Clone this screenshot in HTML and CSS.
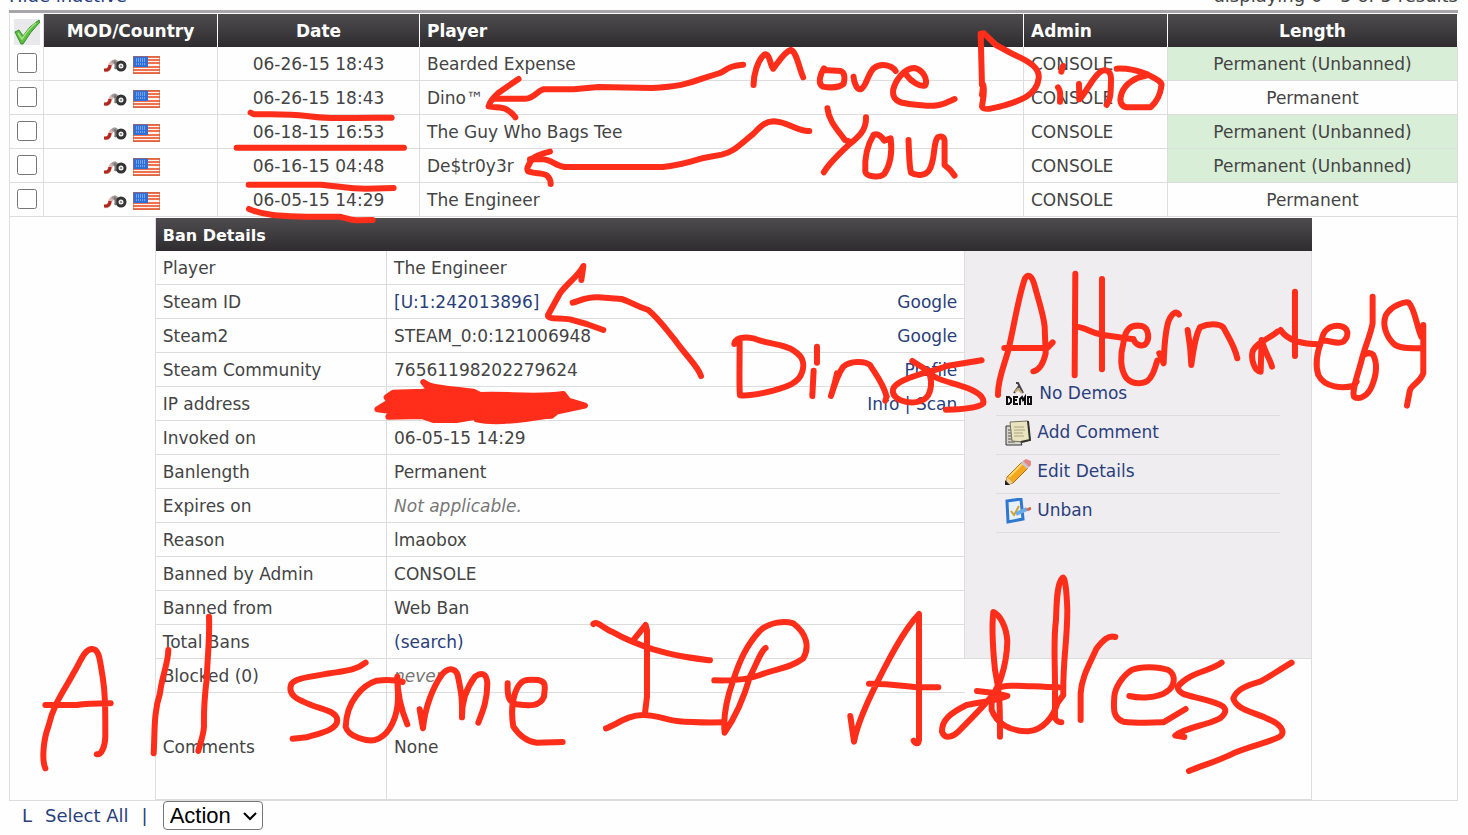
FILE: index.html
```html
<!DOCTYPE html>
<html lang="en">
<head>
  <meta charset="UTF-8" />
  <title>Ban List</title>
  <meta name="viewport" content="width=device-width, initial-scale=1.0" />
  <link rel="stylesheet" href="styles.css">
</head>
<body>

  <!-- Shared icons -->
  <svg class="sprite" aria-hidden="true">
    <symbol id="icon-mod" viewBox="0 0 24 16">
      <path d="M2 13 Q6 14 7 9 Q8 5 13 4" fill="none" stroke="#dcb4b0" stroke-width="4"/>
      <path d="M1 13 H4 Q7 12 7 8" fill="none" stroke="#b3261c" stroke-width="3"/>
      <path d="M8 5 Q11 1 15 4 L13 8 Z" fill="#999"/>
      <circle cx="18" cy="9" r="4" fill="#eee" stroke="#333" stroke-width="3"/>
      <circle cx="18" cy="9" r="1" fill="#777"/>
      <path d="M12 4 Q13 10 12 12" fill="none" stroke="#777" stroke-width="2"/>
    </symbol>
    <symbol id="icon-flag" viewBox="0 0 27 18">
      <rect width="27" height="18" fill="#fff4ee"/>
      <path d="M0 1 H27 M0 4 H27 M0 7 H27 M0 11 H27 M0 14 H27 M0 17 H27" stroke="#f0714f" stroke-width="2"/>
      <rect width="15" height="11" fill="#2f6fd8"/>
      <path d="M3 3 H13 M3 5 H13 M3 8 H13" stroke="#b9d3f7" stroke-dasharray="1 1"/>
      <rect x="0.5" y="0.5" width="26" height="17" fill="none" stroke="#c8603c" stroke-opacity=".6"/>
    </symbol>
  </svg>

  <div class="list-bar">
    <a href="#">Hide inactive</a>
    <span>displaying 0 - 5 of 5 results</span>
  </div>

  <table class="banlist">
    <colgroup>
      <col class="col-check"><col class="col-mod"><col class="col-date"><col><col class="col-admin"><col class="col-length">
    </colgroup>
    <thead>
      <tr>
        <th class="check-all">
          <button type="button" aria-label="Select all">
            <svg width="26" height="26" viewBox="0 0 26 26">
              <rect width="26" height="26" fill="#e9e8ea"/>
              <path d="M1 13 L5 11 L9 17 Q15 7 25 1 L26 3 Q16 13 9 25 L7 25 Z" fill="#5cc03f" stroke="#3a8a2b"/>
              <path d="M4 14 L8 20 Q15 9 22 4" fill="none" stroke="#a5e38a" stroke-width="1.5"/>
            </svg>
          </button>
        </th>
        <th class="center">MOD/Country</th>
        <th class="center">Date</th>
        <th>Player</th>
        <th>Admin</th>
        <th class="center">Length</th>
      </tr>
    </thead>
    <tbody>
      <tr>
        <td class="check"><input type="checkbox" aria-label="Bearded Expense"></td>
        <td class="mod"><svg class="mod-icon"><use href="#icon-mod"/></svg><svg class="flag"><use href="#icon-flag"/></svg></td>
        <td class="center">06-26-15 18:43</td>
        <td>Bearded Expense</td>
        <td>CONSOLE</td>
        <td class="center unbanned">Permanent (Unbanned)</td>
      </tr>
      <tr>
        <td class="check"><input type="checkbox" aria-label="Dino"></td>
        <td class="mod"><svg class="mod-icon"><use href="#icon-mod"/></svg><svg class="flag"><use href="#icon-flag"/></svg></td>
        <td class="center">06-26-15 18:43</td>
        <td>Dino™</td>
        <td>CONSOLE</td>
        <td class="center">Permanent</td>
      </tr>
      <tr>
        <td class="check"><input type="checkbox" aria-label="The Guy Who Bags Tee"></td>
        <td class="mod"><svg class="mod-icon"><use href="#icon-mod"/></svg><svg class="flag"><use href="#icon-flag"/></svg></td>
        <td class="center">06-18-15 16:53</td>
        <td>The Guy Who Bags Tee</td>
        <td>CONSOLE</td>
        <td class="center unbanned">Permanent (Unbanned)</td>
      </tr>
      <tr>
        <td class="check"><input type="checkbox" aria-label="De$tr0y3r"></td>
        <td class="mod"><svg class="mod-icon"><use href="#icon-mod"/></svg><svg class="flag"><use href="#icon-flag"/></svg></td>
        <td class="center">06-16-15 04:48</td>
        <td>De$tr0y3r</td>
        <td>CONSOLE</td>
        <td class="center unbanned">Permanent (Unbanned)</td>
      </tr>
      <tr>
        <td class="check"><input type="checkbox" aria-label="The Engineer"></td>
        <td class="mod"><svg class="mod-icon"><use href="#icon-mod"/></svg><svg class="flag"><use href="#icon-flag"/></svg></td>
        <td class="center">06-05-15 14:29</td>
        <td>The Engineer</td>
        <td>CONSOLE</td>
        <td class="center">Permanent</td>
      </tr>
      <tr>
        <td class="details-cell" colspan="6">

          <table class="details">
            <colgroup><col class="col-label"><col class="col-value"><col class="col-menu"></colgroup>
            <tr><th colspan="3">Ban Details</th></tr>
            <tr>
              <td>Player</td>
              <td>The Engineer</td>
              <td class="menu-cell" rowspan="12">
                <ul class="ban-menu">
                  <li>
                    <svg width="28" height="26" viewBox="0 0 28 26">
                      <path d="M11 2 H13 L18 12 M14 5 L9 12" fill="none" stroke="#444" stroke-width="2"/>
                      <path d="M10 11 L13 8 L17 12" fill="none" stroke="#c5a878" stroke-width="2"/>
                      <path d="M2 16 V23 H4 L6 21 V18 L4 16 Z M13 16 H9 V23 H13 M9 19 H12 M15 24 V18 L17 16 L18 19 L20 16 V24 M23 16 H26 V23 H23 Z" fill="none" stroke="#111" stroke-width="2"/>
                    </svg>
                    <a href="#">No Demos</a>
                  </li>
                  <li>
                    <svg width="26" height="26" viewBox="0 0 26 26">
                      <path d="M1 6 H10 L17 25 H1 Z" fill="#d5d5cd" stroke="#333"/>
                      <path d="M3 10 H6 M3 13 H6 M3 16 H6 M3 19 H7 M3 22 H10" stroke="#555"/>
                      <path d="M5 2 L23 1 L25 20 L19 22 L7 21 Z" fill="#e9e3c0" stroke="#77725a"/>
                      <path d="M23 1 L25 20 L16 22" fill="none" stroke="#33322a" stroke-width="2"/>
                      <path d="M9 7 H19 M9 10 H20 M9 13 H18 M9 16 H19" stroke="#aaa483"/>
                    </svg>
                    <a href="#">Add Comment</a>
                  </li>
                  <li>
                    <svg width="26" height="26" viewBox="0 0 26 26">
                      <path d="M2 18 L17 3 L23 9 L8 24 L1 26 Z" fill="#f4a71e" stroke="#a96a12"/>
                      <path d="M4 18 L18 4" stroke="#ffd36a" stroke-width="2"/>
                      <path d="M2 18 L8 24 L1 26 Z" fill="#e8cf9e"/>
                      <path d="M0 21 L5 26 H0 Z" fill="#222"/>
                      <path d="M16 4 L19 1 L25 7 L22 10 Z" fill="#c3c8d0"/>
                      <path d="M18 2 L21 0 L26 2 V6 L24 8 Z" fill="#e58585"/>
                    </svg>
                    <a href="#">Edit Details</a>
                  </li>
                  <li>
                    <svg width="26" height="26" viewBox="0 0 26 26">
                      <path d="M2 3 L16 1 L18 21 L3 24 Z" fill="#e6f1fb" stroke="#2f78cf" stroke-width="3"/>
                      <path d="M6 13 L9 17 L14 8" fill="none" stroke="#d5a02a" stroke-width="2"/>
                      <path d="M11 16 L22 11" stroke="#6cacea" stroke-width="4"/>
                      <path d="M22 12 L26 10" stroke="#d8674a" stroke-width="3"/>
                    </svg>
                    <a href="#">Unban</a>
                  </li>
                </ul>
              </td>
            </tr>
            <tr><td>Steam ID</td><td><a href="#">[U:1:242013896]</a><span class="tools"><a href="#">Google</a></span></td></tr>
            <tr><td>Steam2</td><td>STEAM_0:0:121006948<span class="tools"><a href="#">Google</a></span></td></tr>
            <tr><td>Steam Community</td><td>76561198202279624<span class="tools"><a href="#">Profile</a></span></td></tr>
            <tr><td>IP address</td><td><span class="tools"><a href="#">Info</a> | <a href="#">Scan</a></span></td></tr>
            <tr><td>Invoked on</td><td>06-05-15 14:29</td></tr>
            <tr><td>Banlength</td><td>Permanent</td></tr>
            <tr><td>Expires on</td><td><i>Not applicable.</i></td></tr>
            <tr><td>Reason</td><td>lmaobox</td></tr>
            <tr><td>Banned by Admin</td><td>CONSOLE</td></tr>
            <tr><td>Banned from</td><td>Web Ban</td></tr>
            <tr><td>Total Bans</td><td><a href="#">(search)</a></td></tr>
            <tr><td>Blocked (0)</td><td class="open"><i>never</i></td><td class="blank" rowspan="2"></td></tr>
            <tr class="comments"><td>Comments</td><td class="open">None</td></tr>
          </table>

        </td>
      </tr>
    </tbody>
  </table>

  <div class="list-actions">
    <span>L</span>
    <a href="#">Select All</a>
    <span>|</span>
    <div class="select-wrap">
      <select aria-label="Action">
        <option>Action</option>
      </select>
      <svg class="chevron" width="16" height="10" viewBox="0 0 16 10">
        <path d="M2 2 L8 8 L14 2" fill="none" stroke="#000" stroke-width="2"/>
      </svg>
    </div>
  </div>

  <!-- Freehand notes drawn over the list -->
  <svg class="ink" viewBox="0 0 1468 835" role="img" aria-label="More Dino, You, Dinos Alternate, All same IP Address">
    <g transform="scale(.3333)">
      <path d="M752 338 L762 343 C800 343 860 340 920 348 C980 356 990 355 1175 353"/>
      <path d="M710 443 H1212"/>
      <path d="M746 554 H962 C1010 558 1060 567 1100 566 L1181 564"/>
      <path d="M747 627 C800 650 860 648 920 650 H1020 C1040 655 1050 661 1070 661 L1118 660"/>
    </g>
    <g transform="translate(420 0) scale(.3571 .3333)">
      <path d="M905 194 C870 196 860 208 840 219 L790 236 C750 252 720 260 650 264 L500 261 L430 268 H345 C325 275 320 296 295 296 H205"/>
      <path d="M276 237 L220 278 C205 292 195 305 192 319 C210 324 230 318 245 330 C258 338 262 345 267 352"/>
      <path d="M1090 393 C1060 396 1030 365 990 364 C960 366 950 385 930 405 C900 430 880 455 845 464 L790 475 C750 488 720 498 680 501 H405 C380 498 370 480 345 478 H308"/>
      <path d="M364 455 C340 460 315 472 312 480 C308 490 295 505 303 514 C320 522 345 518 356 527 C365 536 366 545 366 552"/>
      <path d="M934 255 C934 225 945 180 965 163 C980 160 980 195 989 206 C998 195 1020 155 1038 150 C1055 155 1060 200 1073 232"/>
      <path d="M1131 205 C1122 220 1112 250 1128 260 C1150 264 1175 262 1186 252 C1190 235 1190 218 1178 213 C1160 211 1145 212 1135 210"/>
      <path d="M1214 230 C1215 245 1222 270 1234 268 C1250 262 1252 225 1270 205 C1290 188 1320 195 1332 213"/>
      <path d="M1360 222 C1375 245 1400 262 1415 256 C1422 240 1410 210 1385 204 C1355 203 1330 245 1325 270 C1322 300 1340 308 1370 312 C1430 320 1455 320 1480 305 L1497 297"/>
      <path d="M1141 325 C1145 365 1170 390 1190 420 L1203 425 M1249 352 C1250 390 1230 410 1200 435 C1170 465 1145 490 1131 517"/>
      <path d="M1270 405 C1250 440 1245 480 1247 515 C1250 530 1285 535 1300 522 C1320 490 1322 450 1318 415 L1300 422 C1290 405 1280 400 1270 405"/>
      <path d="M1368 420 C1370 470 1370 500 1375 518 C1390 528 1415 528 1425 512 C1445 480 1435 430 1450 412 C1465 405 1470 415 1469 430 V495 L1485 510 L1497 527"/>
    </g>
    <g transform="translate(960 0) scale(.3333)">
      <path d="M66 255 L62 101 L72 100 L108 135 L160 163 C210 185 240 205 236 235 C230 290 170 305 130 317 C100 325 70 332 66 320 C68 300 75 280 70 255 L66 285"/>
      <path d="M309 198 L304 215 M294 262 C305 275 300 290 300 305"/>
      <path d="M357 252 L358 298 C375 285 400 225 425 213 C445 205 455 220 453 245 C452 280 452 300 440 315"/>
      <path d="M470 206 C500 205 530 210 560 222 C585 235 610 245 604 260 C600 290 585 310 572 322 H500 C480 318 478 300 485 280 C495 250 530 230 555 228"/>
    </g>
    <g transform="translate(140 210) scale(.3333)">
      <path class="scribble" d="M850 516 C870 532 900 535 1000 545 L1020 555 C1100 550 1180 565 1270 552 L1285 572 L1335 587 L1250 605 L1235 617 L1140 622 L1010 620 L950 630 L880 630 L845 618 L745 620 L765 605 L712 598 L750 575 L740 562 L760 548 L850 545 L870 540 Z"/>
      <path d="M1010 628 C1060 640 1140 632 1230 615"/>
    </g>
    <g transform="translate(540 240) scale(.3333)">
      <path d="M124 120 L130 78 C115 110 80 130 60 160 L24 225 C22 240 60 232 90 238 L140 252 L190 270"/>
      <path d="M98 188 C120 182 140 170 175 172 L245 177 C270 184 280 195 325 210 C360 240 380 270 405 300 C440 350 475 380 483 408"/>
      <path d="M583 312 C585 295 610 288 640 295 C680 312 740 312 765 335 C790 350 795 375 785 400 C775 430 740 440 700 452 C660 462 620 468 600 466 C597 440 599 400 599 300"/>
      <path d="M831 320 V368 M821 392 L817 468"/>
      <path d="M891 400 C885 430 880 445 873 468 C880 445 895 400 910 380 C930 362 975 362 990 375 C1005 400 1030 430 1040 470 L1036 482"/>
      <path d="M1117 363 L1160 390 C1175 405 1178 440 1165 465 C1150 490 1110 492 1080 480 C1055 468 1050 445 1075 430 C1110 405 1180 395 1220 378 L1325 361"/>
      <path d="M1160 390 C1180 420 1230 425 1270 440 C1300 450 1335 465 1330 490 C1320 502 1270 508 1218 509"/>
    </g>
    <g transform="translate(960 240) scale(.3333)">
      <path d="M114 465 C112 420 135 370 145 330 C160 270 175 170 195 115 C205 100 215 108 222 130 C235 180 250 220 254 260 L257 340 C250 370 240 390 220 394 M133 324 H262 L278 307"/>
      <path d="M346 101 L344 406"/>
      <path d="M426 117 V388 M350 260 C380 262 390 280 430 285 L520 298"/>
      <path d="M520 298 C528 315 540 320 555 314 C570 300 568 265 545 258 C510 252 495 270 490 310 C480 345 480 390 500 415 C520 435 555 435 570 415 C585 395 585 380 592 362"/>
      <path d="M598 340 L611 370 C612 340 615 280 625 245 C635 220 650 210 657 224"/>
      <path d="M683 270 C690 310 693 340 694 375 C700 330 705 290 720 262 C745 250 775 250 790 262 C805 290 825 320 832 355"/>
      <path d="M905 300 L902 395 C885 395 872 360 878 335 C885 310 930 295 952 275 M905 300 C915 340 930 355 936 380"/>
      <path d="M1005 155 V348 M962 270 C985 305 1030 312 1080 313"/>
      <path d="M1085 302 C1110 300 1130 315 1150 305 C1170 285 1165 262 1140 258 C1110 255 1090 270 1085 300 C1070 340 1065 375 1075 405 C1095 445 1150 445 1180 438 L1190 425"/>
      <path d="M1238 170 V250 C1230 290 1215 320 1205 360 C1195 400 1175 450 1182 470 C1200 482 1225 465 1235 440 C1252 400 1252 370 1240 345 C1230 335 1220 340 1212 345"/>
      <path d="M1384 324 C1345 326 1315 325 1300 310 C1280 290 1265 255 1278 225 C1295 195 1335 185 1345 187 C1365 205 1370 260 1384 290 M1390 255 V400 C1380 430 1350 435 1349 455 L1341 497"/>
    </g>
    <g transform="translate(0 560) scale(.3333)">
      <path d="M136 625 C125 600 130 540 145 500 C160 430 200 380 220 340 C240 310 250 270 275 267 C300 265 300 310 308 350 C316 400 316 440 316 530 C315 560 305 585 290 583 M136 435 H230 C260 430 300 430 332 430"/>
      <path d="M505 270 C505 310 485 350 480 400 C460 460 465 520 461 580"/>
      <path d="M627 170 C630 230 622 300 620 360 C610 440 612 470 612 500 C610 530 600 550 595 573"/>
      <path d="M1097 308 C1070 330 1040 332 990 340 C930 350 880 355 873 375 C865 400 885 415 910 425 C960 450 1010 450 1012 480 C1012 510 960 520 920 532 L878 536"/>
    </g>
    <g transform="translate(380 560) scale(.3333)">
      <path d="M68 366 C40 358 10 360 -10 362 C-50 375 -100 420 -103 500 C-95 530 -40 545 -15 540 C20 530 45 490 52 440 C58 400 50 370 52 350 C52 400 60 440 82 493"/>
      <path d="M119 448 L129 505 C135 440 160 380 185 345 C205 320 225 325 233 345 C245 400 247 420 246 472 C245 430 255 390 285 350 C305 335 320 340 322 370 C322 420 310 450 295 488"/>
      <path d="M383 370 C382 410 385 425 410 433 C450 438 480 440 492 410 C495 380 500 365 475 360 C440 357 420 355 405 400 C395 430 395 470 400 500 C420 530 440 545 470 548 L548 546"/>
      <path d="M640 192 C650 180 670 205 700 217 C740 240 780 255 820 268 C900 290 920 292 990 301 M762 238 L797 195 L801 210 V410 L795 460 M678 505 C710 495 740 465 790 465 C830 465 860 480 890 483 C940 488 980 488 1030 487"/>
      <path d="M1003 361 C1060 363 1100 360 1140 345 C1190 325 1230 325 1270 295 C1290 260 1280 220 1240 190 C1215 182 1170 185 1140 212 C1100 255 1080 300 1060 360 C1035 430 1030 480 1034 518 C1060 480 1090 420 1110 350 C1130 310 1145 270 1157 264"/>
    </g>
    <g transform="translate(820 560) scale(.3333)">
      <path d="M91 468 L102 545 C110 500 140 430 170 370 C200 310 250 210 297 162 V540 C295 555 285 550 281 542 M147 371 C220 370 250 380 300 382 H355"/>
      <path d="M471 393 C500 395 540 402 562 408 C520 425 480 425 440 435 C390 460 365 480 366 515 C375 540 400 530 415 515 C450 480 480 450 510 415 C535 390 560 320 562 245 C560 200 540 165 520 156 C515 200 520 280 525 330 C540 400 540 440 540 530"/>
      <path d="M515 400 V450 C530 490 570 515 625 514 C670 510 700 470 712 430 L730 405 C728 300 742 250 742 150 C740 90 735 50 728 53 C710 70 710 130 708 180 C700 240 705 300 705 370 V470 C705 480 715 487 724 487 M530 385 C560 370 620 380 715 382"/>
      <path d="M782 480 V400 C785 350 810 310 830 265 C850 240 865 225 886 231"/>
      <path d="M928 408 C960 415 1010 415 1040 395 C1065 380 1070 345 1045 330 C1010 318 960 320 935 330 C905 350 885 385 883 410 C880 450 880 475 910 485 C950 490 1000 488 1030 487 L1097 447"/>
      <path d="M1205 308 C1170 335 1110 335 1073 380 C1075 410 1120 405 1190 430 C1220 440 1225 455 1200 475 C1150 500 1100 500 1066 527 L1093 531"/>
      <path d="M1415 308 C1370 335 1340 355 1320 365 C1270 380 1250 390 1240 415 C1250 450 1300 455 1340 475 C1380 490 1400 515 1380 530 C1340 550 1300 555 1240 580 C1190 605 1150 615 1107 633"/>
    </g>
  </svg>

</body>
</html>
```

FILE: styles.css
```css
body {
  margin: 0;
  padding: 0 10px 0 9px;
  background: #fefefe;
  color: #444;
  font-family: Verdana, "DejaVu Sans", sans-serif;
  font-size: 17px;
  position: relative;
  overflow: hidden;
}

a {
  color: #2a3f7c;
  text-decoration: none;
}

.sprite {
  display: none;
}

.list-bar {
  display: flex;
  justify-content: space-between;
  margin-top: -18px;
  height: 28px;
  line-height: 28px;
  font-size: 18px;
  border-bottom: 3px solid #a8a6aa;
}

table {
  border-collapse: separate;
  border-spacing: 0;
  table-layout: fixed;
}

th, td {
  height: 31px;
  padding: 2px 7px 0;
  line-height: 31px;
  text-align: left;
  white-space: nowrap;
}

th {
  background: linear-gradient(#4e4c4f, #2e2c2f);
  color: #fff;
  border-right: 1px solid #fff;
}

td {
  border-right: 1px solid #ddd;
  border-bottom: 1px solid #ddd;
}

.center {
  text-align: center;
}

/* Ban list */
.banlist {
  width: 100%;
  margin-top: 1px;
  border-left: 1px solid #ddd;
}

.col-check { width: 34px; }
.col-mod { width: 174px; }
.col-date { width: 202px; }
.col-admin { width: 144px; }
.col-length { width: 290px; }

.check-all {
  background: #fefefe;
  padding: 2px 0 0;
  border-right-color: #ddd;
}

.check-all button {
  display: block;
  margin: auto;
  padding: 0;
  border: none;
  background: none;
  line-height: 0;
  cursor: pointer;
}

.check {
  padding: 0 0 2px;
}

.check input {
  display: block;
  width: 20px;
  height: 20px;
  margin: auto;
}

.mod {
  padding: 2px 0 0 2px;
  text-align: center;
}

.mod svg {
  vertical-align: middle;
}

.mod-icon {
  width: 24px;
  height: 16px;
  margin-right: 6px;
}

.flag {
  width: 27px;
  height: 18px;
}

.unbanned {
  background: #d9eed7;
}

/* Ban details */
.details-cell {
  padding: 1px 0 0;
}

.details {
  width: 80%;
  margin: 0 auto;
  border-left: 1px solid #ddd;
}

.details th {
  font-size: 16px;
  border-right: none;
}

.col-label { width: 20%; }
.col-value { width: 50%; }
.col-menu { width: 30%; }

.tools {
  float: right;
  color: #2a3f7c;
}

.details i {
  color: #777;
}

.details .open {
  border-right: none;
}

.menu-cell {
  background: #f0edf1;
  padding: 0 31px;
  vertical-align: middle;
}

.ban-menu {
  list-style: none;
  margin: 0;
  padding: 0;
}

.ban-menu li {
  display: flex;
  align-items: center;
  gap: 6px;
  height: 34px;
  padding: 0 0 4px 9px;
  border-bottom: 1px solid #ddd;
}

.comments td {
  height: 104px;
}

/* Footer */
.list-actions {
  display: flex;
  align-items: center;
  gap: 13px;
  padding-left: 13px;
  font-size: 18px;
  color: #2a3f7c;
}

.select-wrap {
  position: relative;
  margin-left: 2px;
}

.list-actions select {
  display: block;
  appearance: none;
  height: 29px;
  padding: 0 30px 0 6px;
  font-family: Arial, "Liberation Sans", sans-serif;
  font-size: 22px;
  color: #000;
  background: #fff;
  border: 1px solid #767676;
  border-radius: 4px;
}

.chevron {
  position: absolute;
  right: 5px;
  top: 10px;
  pointer-events: none;
}

/* Freehand notes */
.ink {
  position: absolute;
  top: 0;
  left: 0;
  width: 100%;
  height: auto;
  pointer-events: none;
}

.ink path {
  fill: none;
  stroke: #ff2e1a;
  stroke-width: 6;
  stroke-linecap: round;
  stroke-linejoin: round;
  vector-effect: non-scaling-stroke;
}

.ink .scribble {
  fill: #ff2e1a;
}
```
